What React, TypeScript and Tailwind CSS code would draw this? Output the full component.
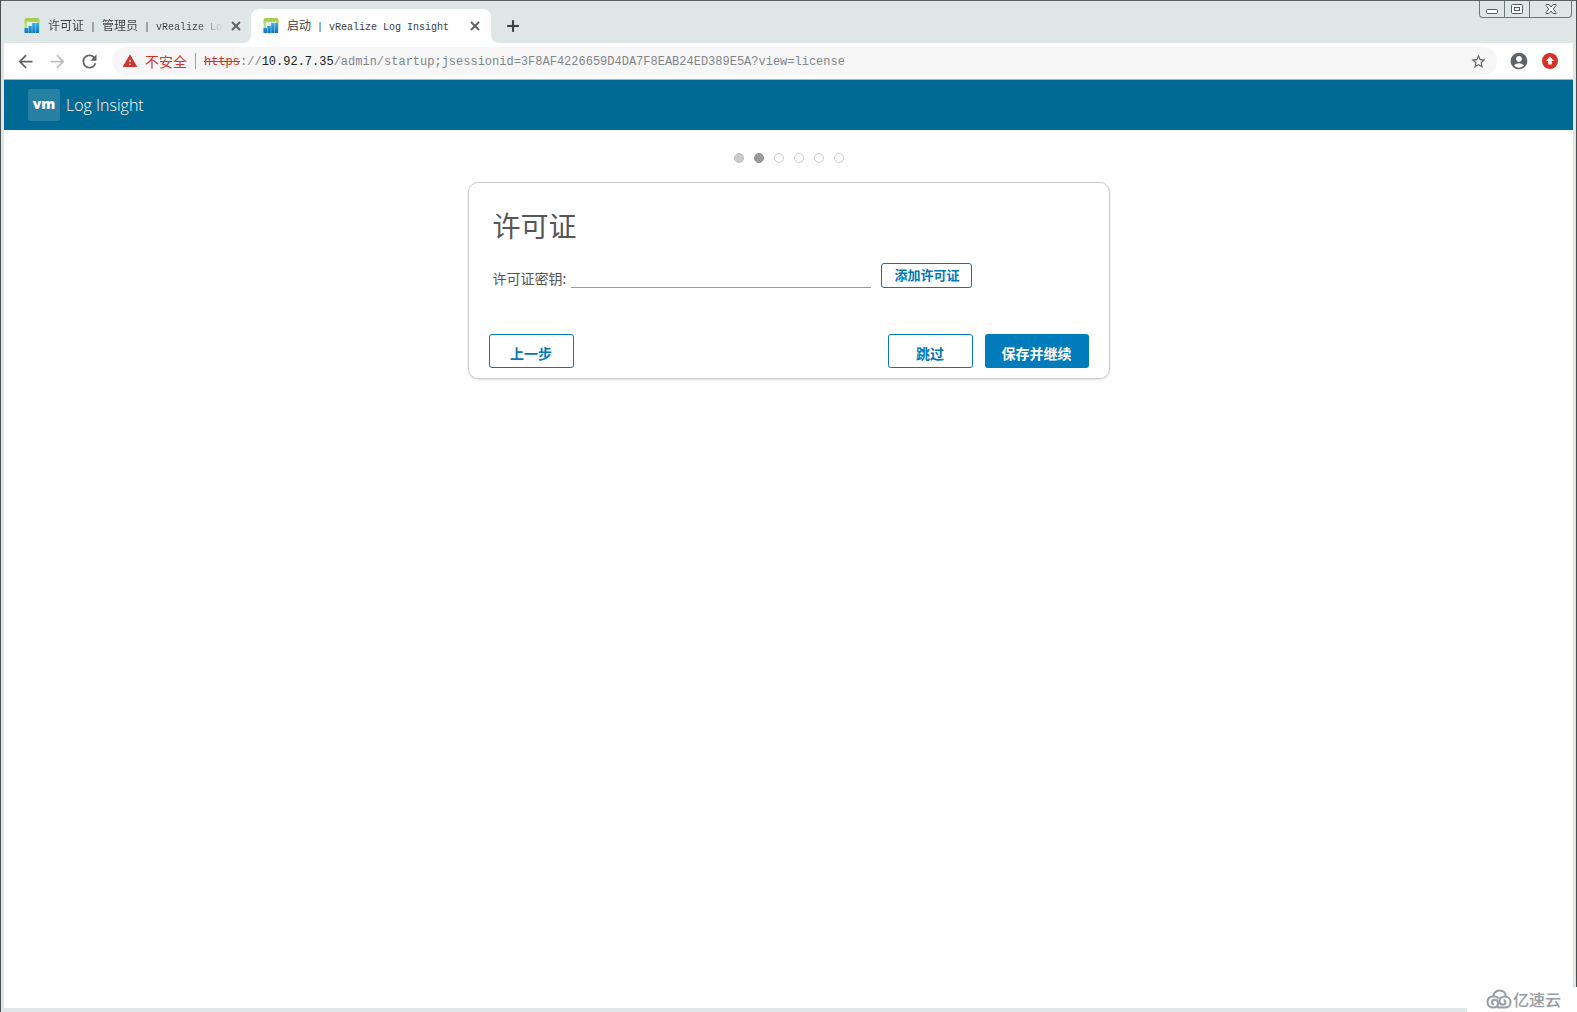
import { Plus, X } from 'lucide-react'
import { MdAccountCircle, MdArrowBack, MdArrowForward, MdRefresh, MdStarBorder, MdWarning } from 'react-icons/md'

const steps = ['done', 'current', 'todo', 'todo', 'todo', 'todo']

const dotStyles: Record<string, string> = {
  done: 'bg-[#cccccc] border-[#bdbdbd]',
  current: 'bg-[#9a9a9a] border-[#8c8c8c]',
  todo: 'bg-white border-[#cccccc]',
}

function Favicon() {
  return (
    <svg viewBox="0 0 16 16" className="size-4 shrink-0" aria-hidden="true">
      <defs>
        <linearGradient id="frame" x1="0" y1="0" x2="0" y2="1">
          <stop offset="0" stopColor="#9fcb4c" />
          <stop offset="0.5" stopColor="#c5dc78" />
          <stop offset="1" stopColor="#a6d8ee" />
        </linearGradient>
        <linearGradient id="bars" x1="0" y1="0" x2="0" y2="1">
          <stop offset="0" stopColor="#35b0e4" />
          <stop offset="1" stopColor="#1173c0" />
        </linearGradient>
      </defs>
      <rect x="0.5" y="0" width="15" height="15" rx="2" fill="url(#frame)" />
      <path d="M3 4h10v11H3z" fill="#e4f3ee" />
      <path d="M0.500 10h3.500v5H0.500zM4.400 8h3.400v7H4.400zM8.200 5h3v10h-3zM11.600 5h3.400v10h-3.400z" fill="url(#bars)" />
    </svg>
  )
}

function TabCorner({ flip }: { flip?: boolean }) {
  return (
    <svg
      viewBox="0 0 8 8"
      aria-hidden="true"
      className={flip ? 'absolute bottom-0 left-full size-2 -scale-x-100' : 'absolute bottom-0 right-full size-2'}
    >
      <path d="M8 0v8H0a8 8 0 0 0 8-8z" fill="#ffffff" />
    </svg>
  )
}

function WindowControls() {
  return (
    <div className="absolute right-1 top-0 flex h-[17px] rounded-b border border-t-0 border-[#70777a] text-[#555c60]">
      <button aria-label="Minimize" className="flex w-[25px] items-center justify-center border-r border-[#70777a]">
        <svg viewBox="0 0 14 12" className="h-3 w-3.5" fill="#fff" stroke="currentColor">
          <rect x="1.5" y="6.5" width="11" height="4" rx="1" />
        </svg>
      </button>
      <button aria-label="Maximize" className="flex w-[25px] items-center justify-center border-r border-[#70777a]">
        <svg viewBox="0 0 14 12" className="h-3 w-3.5" fill="#fff" stroke="currentColor">
          <rect x="1.5" y="1.5" width="11" height="9" rx="1" />
          <rect x="4.5" y="4.5" width="5" height="3" />
        </svg>
      </button>
      <button aria-label="Close" className="flex w-[41px] items-center justify-center">
        <svg viewBox="0 0 14 12" className="h-3 w-3.5" fill="#fff" stroke="currentColor" strokeLinejoin="round">
          <path d="M2 1.500h3L7 4l2-2.500h3v1L9.300 6l2.700 3.500v1H9L7 8l-2 2.500H2v-1L4.700 6 2 2.500z" />
        </svg>
      </button>
    </div>
  )
}

function TabStrip() {
  return (
    <div
      role="tablist"
      className="relative flex h-[43px] items-end border-t border-[#5b6063] bg-[#dfe6e6] pl-[15px] font-['Liberation_Mono','Noto_Sans_CJK_SC',monospace] text-[10px] text-[#3c4043]"
    >
      <div className="flex h-[34px] w-[231px] items-center pl-2">
        <Favicon />
        <button
          role="tab"
          aria-selected="false"
          className="ml-2 w-[176px] overflow-hidden whitespace-pre bg-linear-to-r from-[#3c4043] from-85% to-transparent bg-clip-text pt-0.5 text-left text-transparent"
        >
          <span className="text-xs">许可证</span> | <span className="text-xs">管理员</span> | vRealize Lo
        </button>
        <button aria-label="关闭" className="ml-1">
          <X className="size-4 text-[#5f6368]" strokeWidth={3} strokeLinecap="butt" />
        </button>
      </div>
      <div className="relative ml-1 flex h-[34px] w-60 items-center rounded-t-lg bg-white pl-3 pr-2">
        <TabCorner />
        <Favicon />
        <button role="tab" aria-selected="true" className="ml-2 flex-1 whitespace-pre pt-0.5 text-left">
          <span className="text-xs">启动</span> | vRealize Log Insight
        </button>
        <button aria-label="关闭">
          <X className="size-4 text-[#5f6368]" strokeWidth={3} strokeLinecap="butt" />
        </button>
        <TabCorner flip />
      </div>
      <button aria-label="打开新的标签页" className="ml-3 flex h-[34px] items-center">
        <Plus className="size-5 text-[#3c4043]" strokeWidth={2.5} strokeLinecap="butt" />
      </button>
      <WindowControls />
    </div>
  )
}

function Toolbar() {
  return (
    <div className="flex h-[37px] items-center border-b border-[#a9b4b8] bg-white pl-[11px] pr-3.5 text-[#5f6368]">
      <button aria-label="后退">
        <MdArrowBack className="size-[21px]" />
      </button>
      <button aria-label="前进" className="ml-[11px] text-[#bdc1c6]">
        <MdArrowForward className="size-[21px]" />
      </button>
      <button aria-label="重新加载" className="ml-[11px]">
        <MdRefresh className="size-[21px]" />
      </button>
      <div className="ml-3 flex h-7 flex-1 items-center rounded-full bg-[#f6f6f6] px-2.5">
        <MdWarning className="size-4 text-[#cf332b]" />
        <span className="ml-[7px] font-['Noto_Sans_CJK_SC',sans-serif] text-sm text-[#cf332b]">不安全</span>
        <span className="mx-2 h-4 w-px bg-[#9aa0a6]" />
        <span className="flex-1 pt-0.5 font-['Liberation_Mono',monospace] text-xs text-[#80868b]">
          <span className="text-[#cf332b] line-through">https</span>://
          <span className="text-[#202124]">10.92.7.35</span>
          /admin/startup;jsessionid=3F8AF4226659D4DA7F8EAB24ED389E5A?view=license
        </span>
        <button aria-label="为此页添加书签">
          <MdStarBorder className="size-[17px]" />
        </button>
      </div>
      <button aria-label="用户" className="ml-3">
        <MdAccountCircle className="size-5" />
      </button>
      <button aria-label="更新" className="ml-3">
        <svg viewBox="0 0 18 18" className="size-[18px]">
          <circle cx="9" cy="9" r="8" fill="#d93025" />
          <path d="M9 4.500 13 9h-2.200v3.500H7.200V9H5z" fill="#fff" />
        </svg>
      </button>
    </div>
  )
}

function LicenseCard() {
  return (
    <form
      onSubmit={e => e.preventDefault()}
      className="mx-auto mt-[19px] w-full max-w-[642px] rounded-[10px] border border-[#cccccc] px-5 pb-2.5 pt-[22px] font-['Noto_Sans_CJK_SC',sans-serif] shadow-sm"
    >
      <h1 className="pl-1 text-[28px] leading-10 text-[#565656]">许可证</h1>
      <div className="mt-[18px] flex items-end pl-1">
        <label htmlFor="license" className="text-sm leading-5 text-[#565656]">
          许可证密钥:
        </label>
        <input id="license" type="text" className="ml-[5px] h-6 w-[300px] border-b border-[#9a9a9a] outline-none" />
        <button
          type="button"
          className="ml-2.5 h-[25px] w-[91px] rounded-[3px] border border-[#0079b8] pb-0.5 text-[13px] leading-5 font-bold text-[#0079b8]"
        >
          添加许可证
        </button>
      </div>
      <div className="mt-[46px] flex gap-3 text-sm font-bold">
        <button type="button" className="mr-auto h-[34px] w-[85px] rounded-[3px] border border-[#0079b8] pt-1 text-[#0079b8]">
          上一步
        </button>
        <button type="button" className="h-[34px] w-[85px] rounded-[3px] border border-[#0079b8] pt-1 text-[#0079b8]">
          跳过
        </button>
        <button type="submit" className="h-[34px] rounded-[3px] bg-[#007bbb] px-[17px] pt-1 text-white">
          保存并继续
        </button>
      </div>
    </form>
  )
}

function Watermark() {
  return (
    <div className="absolute bottom-0 -right-px flex h-[25px] w-[110px] items-center bg-white pb-0.5 pl-[19px] text-[#979ba4]">
      <svg viewBox="0 0 26 20" className="h-5 w-[26px]" fill="none" stroke="currentColor" strokeWidth="2">
        <path d="M7 8.500C7 4.500 9.800 1.500 13.500 1.500c3.500 0 5.800 2.200 6.400 5.200" />
        <path d="M13 9.500C11.500 7.800 9.300 7 7 7.300 3.800 7.700 1.500 10 1.500 13c0 3.200 2.300 5.500 5.500 5.500 3 0 5-1.800 5-4.300 0-2-1.400-3.400-3.200-3.400-1.600 0-2.800 1.100-2.800 2.500 0 1.200.8 2 2 2" />
        <path d="M11 18c1 .4 2 .5 3 .5h5c3.200 0 5.500-2.300 5.500-5.500 0-3-2.300-5.500-5.500-5.500-3 0-5.500 2-5.500 4.800 0 2 1.400 3.400 3.200 3.400 1.600 0 2.800-1.100 2.800-2.500 0-1.200-.8-2-2-2" />
      </svg>
      <span className="ml-px font-['Noto_Sans_CJK_SC',sans-serif] text-base leading-5 font-medium">亿速云</span>
    </div>
  )
}

export default function App() {
  return (
    <div className="relative flex min-h-screen flex-col border-x border-[#4a4f52] bg-[#dfe6e6]">
      <TabStrip />
      <div className="mx-[3px] mb-1 flex flex-1 flex-col bg-white">
        <Toolbar />
        <header className="flex h-[50px] items-center bg-[#006a95] pl-6 text-white">
          <span className="flex size-8 items-center justify-center rounded-xs bg-white/15 pb-0.5 font-['Open_Sans',sans-serif] text-sm leading-5 font-extrabold">
            vm
          </span>
          <span className="ml-1.5 font-['Open_Sans',sans-serif] text-base leading-5 font-light">Log Insight</span>
        </header>
        <main className="pt-[23px]">
          <div className="flex justify-center gap-2.5">
            {steps.map((step, i) => (
              <span key={i} className={`size-2.5 rounded-full border ${dotStyles[step]}`} />
            ))}
          </div>
          <LicenseCard />
        </main>
      </div>
      <Watermark />
    </div>
  )
}
